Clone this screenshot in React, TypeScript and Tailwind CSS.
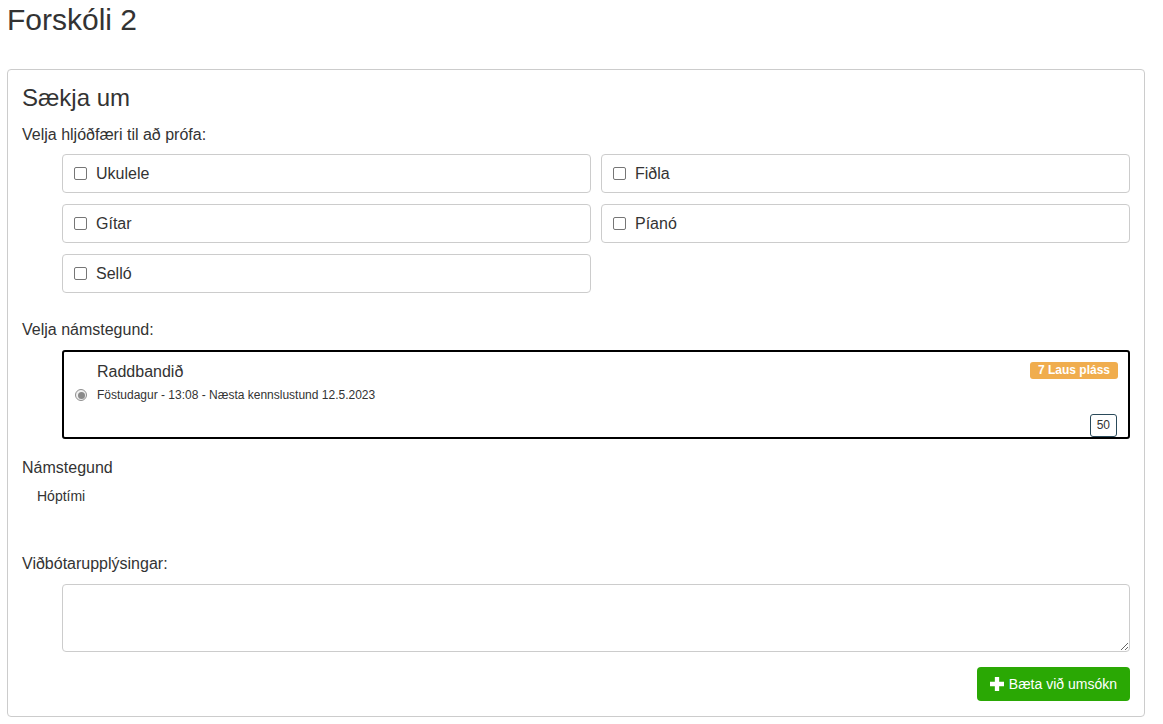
import React from 'react';

const instruments = ['Ukulele', 'Fiðla', 'Gítar', 'Píanó', 'Selló'];

const CheckOption: React.FC<{ label: string }> = ({ label }) => (
  <label className="flex items-center h-[39px] border border-[#ccc] rounded-[4px] pl-[11px] text-[16px] text-[#333]">
    <span className="w-[13px] h-[13px] border border-[#767676] rounded-[2px] bg-white mr-[9px]" />
    {label}
  </label>
);

export default function App() {
  return (
    <div className="min-h-screen bg-white pl-[7px] pr-[18px] text-[#333]" style={{ fontFamily: '"Liberation Sans", Arial, sans-serif' }}>
      <h1 className="text-[30px] leading-[33px] pt-[3px]">Forskóli 2</h1>

      <div className="mt-[33px] border border-[#ccc] rounded-[4px] px-[14px] pt-[14px] pb-[15px]">
        <h2 className="text-[24px] leading-[28px]">Sækja um</h2>
        <div className="text-[16px] leading-[20px] mt-[13px]">Velja hljóðfæri til að prófa:</div>

        <div className="ml-[40px] mt-[9px] grid grid-cols-2 gap-x-[10px] gap-y-[11px]">
          {instruments.map((i) => (
            <CheckOption key={i} label={i} />
          ))}
        </div>

        <div className="text-[16px] leading-[20px] mt-[27px]">Velja námstegund:</div>

        <div className="ml-[40px] mt-[10px] border-2 border-black rounded-[3px] h-[89px] relative">
          <div className="pl-[33px] pt-[10px] text-[16px] leading-[20px]">Raddbandið</div>
          <div className="flex items-center mt-[5px] pl-[11px]">
            <span className="w-[12px] h-[12px] rounded-full border border-[#8f8f8f] bg-[#f0f0f0] flex items-center justify-center mr-[10px]">
              <span className="w-[7px] h-[7px] rounded-full bg-[#8a8a8a]" />
            </span>
            <span className="text-[12px] leading-[16px]">Föstudagur - 13:08 - Næsta kennslustund 12.5.2023</span>
          </div>
          <span className="absolute right-[10px] top-[10px] bg-[#f0ad4e] text-white font-bold text-[12px] leading-[17px] px-[8px] rounded-[3px]">
            7 Laus pláss
          </span>
          <span className="absolute right-[11px] bottom-[0px] border border-[#2a4a5a] rounded-[3px] text-[12px] leading-[21px] px-[6px] text-[#333]">
            50
          </span>
        </div>

        <div className="text-[16px] leading-[20px] mt-[19px]">Námstegund</div>
        <div className="text-[14px] leading-[18px] mt-[9px] ml-[15px]">Hóptími</div>

        <div className="text-[16px] leading-[20px] mt-[49px]">Viðbótarupplýsingar:</div>
        <div className="ml-[40px] mt-[10px]">
          <textarea className="block w-full h-[68px] border border-[#ccc] rounded-[4px] resize-y" />
        </div>

        <div className="flex justify-end mt-[15px]">
          <button className="flex items-center gap-[5px] h-[34px] px-[13px] bg-[#2aa804] text-white text-[14px] rounded-[4px]">
            <svg width="14" height="14" viewBox="0 0 13 13">
              <path d="M4.5 0h4v4.5h4.5v4h-4.5v4.5h-4v-4.5h-4.5v-4h4.5z" fill="white" />
            </svg>
            Bæta við umsókn
          </button>
        </div>
      </div>
    </div>
  );
}
